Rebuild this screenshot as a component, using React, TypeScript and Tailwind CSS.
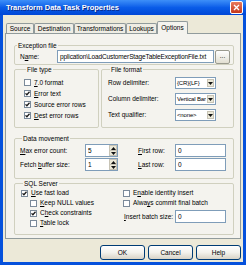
import type { ReactNode } from "react";

const TABS = ["Source", "Destination", "Transformations", "Lookups", "Options"];
const TAB_W: Record<string, string> = {
  Source: "w-[28px]",
  Destination: "w-[40px]",
  Transformations: "w-[52px]",
  Lookups: "w-[31px]",
  Options: "w-[31px]",
};

function Group({ title, className = "", children }: { title: string; className?: string; children: ReactNode }) {
  return (
    <fieldset className={`rounded-[2px] border border-[#d0d0bf] ${className}`}>
      <legend className="ml-[2px] px-[1px] text-[6.5px] leading-[9px]">{title}</legend>
      {children}
    </fieldset>
  );
}

function Check({ on, children, className = "" }: { on?: boolean; children: ReactNode; className?: string }) {
  return (
    <div className={`flex h-[10px] items-center gap-[3px] ${className}`}>
      <span className="flex h-[7px] w-[7px] shrink-0 items-center justify-center border border-[#7b8a9a] bg-white">
        {on && (
          <svg width="5" height="5" viewBox="0 0 5 5">
            <path d="M0.5 2.4 L1.9 3.8 L4.5 0.8" fill="none" stroke="#1a1a1a" strokeWidth="1.3" />
          </svg>
        )}
      </span>
      <span className="whitespace-nowrap">{children}</span>
    </div>
  );
}

function TextBox({ value, className = "" }: { value: string; className?: string }) {
  return (
    <div className={`flex h-[13px] items-center overflow-hidden whitespace-nowrap border border-[#7f9db9] bg-white pl-[2px] ${className}`}>
      {value}
    </div>
  );
}

function Arrow({ up }: { up?: boolean }) {
  return (
    <svg width="5" height="3" viewBox="0 0 5 3">
      <path d={up ? "M0 3 L2.5 0 L5 3 Z" : "M0 0 L5 0 L2.5 3 Z"} fill="#111" />
    </svg>
  );
}

function Select({ value }: { value: string }) {
  return (
    <div className="flex h-[12px] w-[41px] items-stretch border border-[#7f9db9] bg-white">
      <span className="flex-1 overflow-hidden whitespace-nowrap pl-[1px] text-[6px] leading-[10px] tracking-[-0.15px]">{value}</span>
      <span className="m-[1px] flex w-[7px] shrink-0 items-center justify-center border border-[#c7c3b5] bg-[#ece9d8]">
        <Arrow />
      </span>
    </div>
  );
}

function Spin({ value }: { value: string }) {
  return (
    <div className="flex h-[13px] w-[33px] items-stretch border border-[#7f9db9] bg-white">
      <span className="flex-1 pl-[2px] leading-[11px]">{value}</span>
      <span className="flex w-[8px] flex-col">
        <span className="flex flex-1 items-center justify-center border border-[#c7c3b5] bg-[#ece9d8]">
          <Arrow up />
        </span>
        <span className="flex flex-1 items-center justify-center border border-t-0 border-[#c7c3b5] bg-[#ece9d8]">
          <Arrow />
        </span>
      </span>
    </div>
  );
}

function Button({ children }: { children: ReactNode }) {
  return (
    <div className="flex h-[15px] w-[45px] items-center justify-center rounded-[3px] border border-[#003c74] bg-linear-to-b from-[#ffffff] via-[#f3f2ec] to-[#d8d3c6]">
      {children}
    </div>
  );
}

export default function App() {
  return (
    <div className="flex h-[265px] w-[246px] flex-col bg-[#0551dc] font-['Liberation_Sans',Arial,sans-serif] text-[6.5px] text-black">
      {/* title bar */}
      <div className="flex h-[15px] shrink-0 items-center bg-linear-to-b from-[#3d8ff8] via-[#0a5ce8] to-[#0047d6] pl-[6px] pr-[3px]">
        <span className="flex-1 text-[7.5px] font-bold text-white [text-shadow:1px_1px_0_#0a2a8a]">
          Transform Data Task Properties
        </span>
        <span className="flex h-[13px] w-[13px] items-center justify-center rounded-[2px] border border-white bg-linear-to-b from-[#e87a5c] to-[#c4361a]">
          <svg width="7" height="7" viewBox="0 0 7 7">
            <path d="M1 1 L6 6 M6 1 L1 6" stroke="#fff" strokeWidth="1.4" />
          </svg>
        </span>
      </div>

      {/* body */}
      <div className="mx-[3px] mb-[3px] flex flex-1 flex-col bg-[#ece9d8] px-[2px] pt-[6px]">
        {/* tabs */}
        <div className="flex h-[12px] items-end pl-[1px]">
          {TABS.map((t) => {
            const on = t === "Options";
            return (
              <div
                key={t}
                className={`flex items-center justify-center whitespace-nowrap rounded-t-[2px] border border-b-0 border-[#919b9c] ${TAB_W[t]} ${
                  on ? "relative z-10 -mb-px h-[13px] bg-[#f4f3ee]" : "h-[10px] bg-[#efede4]"
                }`}
              >
                {t}
              </div>
            );
          })}
        </div>

        {/* panel */}
        <div className="h-[206px] border border-[#919b9c] bg-[#f4f3ee] pl-[8px] pt-[7px]">
          <div className="flex w-[220px] flex-col">
            <Group title="Exception file" className="pb-[1px]">
              <div className="flex h-[13px] items-center pl-[5px]">
                <span className="w-[37px]">
                  N<u>a</u>me:
                </span>
                <TextBox
                  value="pplication\LoadCustomerStageTableExceptionFile.txt"
                  className="w-[157px] tracking-[-0.12px]"
                />
                <div className="ml-[1px] flex h-[14px] w-[15px] items-center justify-center rounded-[2px] border border-[#9a9a8e] bg-linear-to-b from-white to-[#e2dfd2] leading-none">
                  ...
                </div>
              </div>
            </Group>

            <div className="flex gap-[2px]">
              <Group title="File type" className="w-[85px] pb-[6px] pl-[9px] pt-[3px]">
                <div className="flex flex-col">
                  <Check className="h-[11px]">
                    <u>7</u>.0 format
                  </Check>
                  <Check on className="h-[11px]">
                    <u>E</u>rror text
                  </Check>
                  <Check on className="h-[11px]">
                    Source error rows
                  </Check>
                  <Check on className="h-[11px]">
                    <u>D</u>est error rows
                  </Check>
                </div>
              </Group>
              <Group title="File format" className="flex-1 pb-[6px] pl-[6px] pt-[3px]">
                <div className="flex flex-col gap-[4px]">
                  {[
                    ["Row delimiter:", "{CR}{LF}"],
                    ["Column delimiter:", "Vertical Bar"],
                    ["Text qualifier:", "<none>"],
                  ].map(([l, v]) => (
                    <div key={l} className="flex h-[12px] items-center">
                      <span className="w-[67px]">{l}</span>
                      <Select value={v} />
                    </div>
                  ))}
                </div>
              </Group>
            </div>

            <Group title="Data movement" className="mt-[6px] pb-[7px] pl-[5px] pt-[1px]">
              <div className="flex flex-col gap-[1px]">
                <div className="flex h-[13px] items-center">
                  <span className="w-[65px]">
                    <u>M</u>ax error count:
                  </span>
                  <Spin value="5" />
                  <span className="ml-[20px] w-[37px]">
                    <u>F</u>irst row:
                  </span>
                  <TextBox value="0" className="w-[51px]" />
                </div>
                <div className="flex h-[13px] items-center">
                  <span className="w-[65px]">
                    Fetch <u>b</u>uffer size:
                  </span>
                  <Spin value="1" />
                  <span className="ml-[20px] w-[37px]">
                    <u>L</u>ast row:
                  </span>
                  <TextBox value="0" className="w-[51px]" />
                </div>
              </div>
            </Group>

            <Group title="SQL Server" className="pb-[6px] pl-[6px]">
              <div className="flex">
                <div className="flex w-[102px] flex-col">
                  <Check on>
                    <u>U</u>se fast load
                  </Check>
                  <Check className="ml-[9px]">
                    <u>K</u>eep NULL values
                  </Check>
                  <Check on className="ml-[9px]">
                    C<u>h</u>eck constraints
                  </Check>
                  <Check className="ml-[9px]">
                    <u>T</u>able lock
                  </Check>
                </div>
                <div className="flex flex-col">
                  <Check>
                    E<u>n</u>able identity insert
                  </Check>
                  <Check>
                    Alwa<u>y</u>s commit final batch
                  </Check>
                  <div className="mt-[2px] flex h-[13px] items-center pl-[1px]">
                    <span className="w-[51px]">
                      <u>I</u>nsert batch size:
                    </span>
                    <TextBox value="0" className="w-[51px]" />
                  </div>
                </div>
              </div>
            </Group>
          </div>
        </div>

        {/* buttons */}
        <div className="mt-[6px] flex justify-end gap-[3px]">
          <Button>OK</Button>
          <Button>Cancel</Button>
          <Button>Help</Button>
        </div>
      </div>
    </div>
  );
}
